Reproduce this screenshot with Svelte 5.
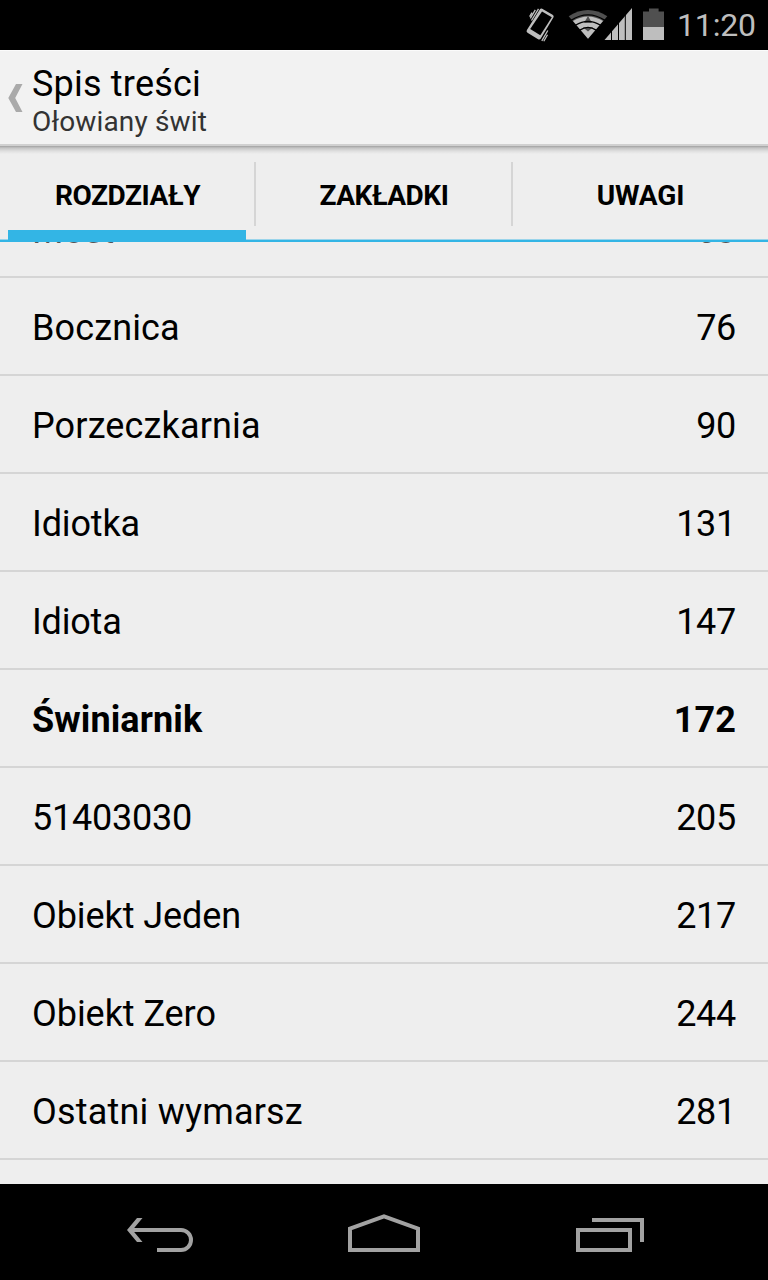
<script>
  const tabs = ['ROZDZIAŁY', 'ZAKŁADKI', 'UWAGI'];
  const chapters = [
    { title: 'Most', page: 63, tracking: 0 },
    { title: 'Bocznica', page: 76, tracking: 0.12 },
    { title: 'Porzeczkarnia', page: 90, tracking: 0.14 },
    { title: 'Idiotka', page: 131, tracking: -0.15 },
    { title: 'Idiota', page: 147, tracking: -0.2 },
    { title: 'Świniarnik', page: 172, tracking: 0.1, current: true },
    { title: '51403030', page: 205, tracking: -0.25 },
    { title: 'Obiekt Jeden', page: 217, tracking: -0.08 },
    { title: 'Obiekt Zero', page: 244, tracking: -0.05 },
    { title: 'Ostatni wymarsz', page: 281, tracking: 0.2 }
  ];
</script>

<div class="screen">
  <div class="status">
    <svg class="icons" width="146" height="50" viewBox="522 0 146 50">
      <path d="M542.2 8.8 L552.6 14.8 Q554.4 15.9 553.4 17.6 L540.8 38.4 Q539.8 40.1 538.1 39.2 L527.5 32.8 Q525.9 31.8 526.9 30.1 L539.8 9.5 Q540.8 8 542.2 8.8Z" fill="#bebebe" />
      <path d="M542 11.5 L551.8 17.3 L540.3 35.2 L530.2 29Z" fill="#000" />
      <path d="M538.5 8.8 L531.5 20.5 M535.3 9.8 L530.3 18.4 M532 12.6 L529.6 16.7 M547.8 30.5 L541.8 40.8 M547.5 34.8 L543.8 41.3" fill="none" stroke="#bebebe" stroke-width="1.3" />
      <path d="M568.7 16.2 Q588 3.8 607.3 16.2 L588 38.8Z" fill="#505050" />
      <path d="M573 21 Q588 11.8 603 21 L588 38.8Z" fill="#bebebe" />
      <path d="M588 16 L592 23 L584 23Z M583 27.3 H593 L588 31.5Z" fill="#505050" />
      <path d="M571 20.4 Q588 9.4 605 20.4 M575.4 25.2 Q588 17.4 600.6 25.2 M579.8 30.1 Q588 24.8 596.2 30.1" fill="none" stroke="#000" stroke-width="1.3" />
      <path d="M604.5 40 L632 8 V40Z" fill="#bebebe" />
      <path d="M611.5 30 V40 M618.5 22 V40 M625.3 14 V40" stroke="#000" stroke-width="1" />
      <path d="M643 11.5 H649 V8.5 H658.6 V11.5 H664 V27 H643Z" fill="#505050" />
      <path d="M643 27 H664 V40 H643Z" fill="#bebebe" />
    </svg>
    <span class="clock">11:20</span>
  </div>

  <header>
    <svg class="up" width="32" height="93" viewBox="0 51 32 93">
      <path d="M16 84 H22.5 L15.2 98 L22.5 112 H16 L8.3 98Z" fill="#aaa" />
    </svg>
    <div class="titles">
      <h1>Spis treści</h1>
      <p>Ołowiany świt</p>
    </div>
  </header>

  <nav>
    {#each tabs as tab, i}
      <button class:active={i === 0}><span>{tab}</span></button>
    {/each}
  </nav>

  <main>
    <ul>
      {#each chapters as c}
        <li class:current={c.current}>
          <span style="letter-spacing: {c.tracking}px">{c.title}</span>
          <span class="page">{c.page}</span>
        </li>
      {/each}
    </ul>
  </main>

  <footer>
    <svg width="768" height="96" viewBox="0 1184 768 96" fill="none" stroke="#a2a2a2" stroke-width="4">
      <path d="M130 1230 H181 A10 10 0 0 1 181 1250 H157" />
      <path d="M137 1218 H142.5 L132.5 1230 L142.5 1242 H137 L127 1230Z" fill="#a2a2a2" stroke="none" />
      <path d="M350 1228.6 L384 1216.3 L418 1228.6 V1250 H350Z" />
      <path d="M578 1230 H630 V1250 H578Z M592 1220 H642 V1242" />
    </svg>
  </footer>
</div>

<style>
  :global(body) { margin: 0; background: #000; }
  .screen {
    width: 768px;
    height: 1280px;
    display: flex;
    flex-direction: column;
    overflow: hidden;
    background: #eee;
    color: #000;
    font-family: Roboto, "Liberation Sans", sans-serif;
  }
  .status {
    flex: 0 0 50px;
    display: flex;
    align-items: center;
    justify-content: flex-end;
    padding-right: 12px;
    background: #000;
  }
  .icons { margin-right: 9px; }
  .clock {
    width: 79px;
    height: 50px;
    color: #bebebe;
    font-size: 32px;
    line-height: 51px;
    letter-spacing: -0.15px;
    white-space: nowrap;
  }
  header {
    flex: 0 0 96px;
    box-sizing: border-box;
    display: flex;
    background: #f2f2f2;
    border-top: 1px solid #fbfbfb;
    border-bottom: 2px solid #d0d0d0;
  }
  .up { flex: none; }
  .titles { padding-top: 12px; }
  h1, p { margin: 0; font-weight: 400; white-space: nowrap; }
  h1 { font-size: 36px; line-height: 42px; letter-spacing: 0.2px; }
  p { margin-top: 1px; font-size: 28px; line-height: 32px; letter-spacing: 0.16px; color: #333; }
  nav {
    flex: 0 0 96px;
    box-sizing: border-box;
    display: grid;
    grid-template-columns: repeat(3, 1fr);
    background:
      linear-gradient(#33b5e5, #33b5e5) bottom / 100% 2px no-repeat,
      linear-gradient(rgba(51, 181, 229, 0.45), rgba(51, 181, 229, 0.45)) bottom / 100% 3px no-repeat,
      linear-gradient(#a0a0a0, #c4c4c4 25%, #dedede 62%, #eee) top / 100% 8px no-repeat,
      #eee;
  }
  button {
    appearance: none;
    background: none;
    border: 0;
    margin: 0;
    padding: 16px 0 0;
    display: flex;
    font: 700 28px/64px Roboto, "Liberation Sans", sans-serif;
    letter-spacing: -0.42px;
    color: #000;
  }
  button span { flex: 1; height: 64px; text-align: center; padding-top: 2px; box-sizing: border-box; }
  button:first-child span { margin-left: -1px; }
  button + button span { border-left: 2px solid #d5d5d5; margin-left: -2px; }
  button:last-child span { margin-left: -1px; letter-spacing: -0.1px; }
  .active { background: linear-gradient(#33b5e5, #33b5e5) 8px 100% / 238px 12px no-repeat; }
  main { flex: 1; min-height: 0; overflow: hidden; }
  ul { list-style: none; margin: -62px 0 0; padding: 0; }
  li {
    height: 98px;
    box-sizing: border-box;
    display: flex;
    justify-content: space-between;
    align-items: center;
    padding: 4px 32px 0;
    border-bottom: 2px solid #d5d5d5;
    font-size: 36px;
    line-height: 42px;
  }
  li:first-child { padding-top: 6px; color: #555; }
  .page { letter-spacing: -0.3px; }
  .current { font-weight: 700; }
  .current .page { letter-spacing: 0.1px; }
  footer { flex: 0 0 96px; background: #000; }
  footer svg { display: block; }
</style>
